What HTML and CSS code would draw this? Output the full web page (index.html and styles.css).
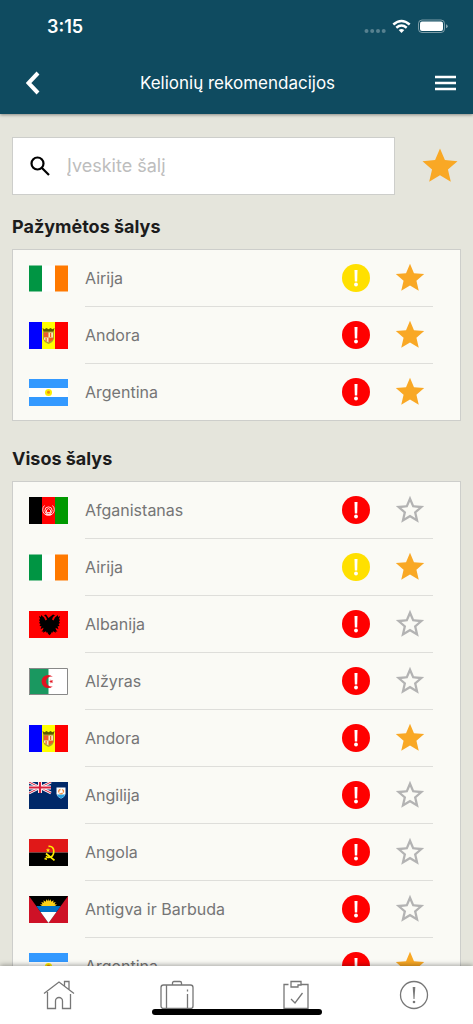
FILE: index.html
```html
<!DOCTYPE html>
<html lang="lt">
<head>
<meta charset="utf-8">
<meta name="viewport" content="width=device-width, initial-scale=1">
<title>Kelionių rekomendacijos</title>
<link rel="stylesheet" href="styles.css">
</head>
<body>
<svg class="sprite" aria-hidden="true">
  <symbol id="star" viewBox="0 0 24 24"><path d="M12 17.27L18.18 21l-1.64-7.03L22 9.24l-7.19-.61L12 2 9.19 8.63 2 9.24l5.46 4.73L5.82 21z"/></symbol>
  <symbol id="star-outline" viewBox="0 0 24 24"><path d="M22 9.24l-7.19-.62L12 2 9.19 8.63 2 9.24l5.46 4.73L5.82 21 12 17.27 18.18 21l-1.63-7.03L22 9.24zM12 15.4l-3.76 2.27 1-4.28-3.32-2.88 4.38-.38L12 6.1l1.71 4.04 4.38.38-3.32 2.88 1 4.28L12 15.4z"/></symbol>
  <symbol id="alert" viewBox="0 0 28 28"><circle cx="14" cy="14" r="14"/><path d="M12.500 6h3l-.3 11.500h-2.400z" fill="#fff"/><circle cx="14" cy="20.500" r="1.900" fill="#fff"/></symbol>

  <symbol id="flag-ie" viewBox="0 0 39 26"><path fill="#009543" d="M0 0h13v26H0z"/><path fill="#fff" d="M13 0h13v26H13z"/><path fill="#ff7900" d="M26 0h13v26H26z"/></symbol>
  <symbol id="flag-ad" viewBox="0 0 39 27"><path fill="#00f" d="M0 0h13v27H0z"/><path fill="#ff0" d="M13 0h13v27H13z"/><path fill="#f00" d="M26 0h13v27H26z"/>
    <path fill="#5c5a00" d="M13.500 6l2 1.200L17.500 6l2 1.200 2-1.200 2 1.200L25.500 6l-1 4h-10z"/><path fill="#b0a030" d="M14 9.500h11v7q-1 4-5.500 5.500Q15 20.500 14 16.500z"/><path fill="#f05a28" d="M15 10.500h4.500v5H15zM19.500 15.500H24v2l-4.500 3z"/><path fill="#fbe6b8" d="M19.500 10.500H24v5h-4.500zM15 15.500h4.500v5l-4.500-3z"/><path fill="#f05a28" d="M21 11h1.200v4H21zM16.500 16h1.200v3h-1.200z"/></symbol>
  <symbol id="flag-ar" viewBox="0 0 39 27"><path fill="#39f" d="M0 0h39v27H0z"/><path fill="#fff" d="M0 9h39v9H0z"/><circle cx="19.500" cy="13.500" r="3.500" fill="#fe0"/><circle cx="19.500" cy="13.300" r="1.500" fill="#f08a10"/></symbol>
  <symbol id="flag-af" viewBox="0 0 39 27"><path d="M0 0h13v27H0z"/><path fill="#f00" d="M13 0h13v27H13z"/><path fill="#090" d="M26 0h13v27H26z"/>
    <g fill="none" stroke="#fff" stroke-opacity=".8"><path d="M15.500 8.500a5.800 5.800 0 1 0 8 0"/><circle cx="19.500" cy="13.500" r="3.600"/><path d="M17.500 15.500v-2.500l2-1.500 2 1.500v2.500zM16.500 17.500h6"/></g></symbol>
  <symbol id="flag-al" viewBox="0 0 39 27"><path fill="#f00" d="M0 0h39v27H0z"/><path d="M19.500 7L17 3.500l-2 .8 2 1.700 1 2.500-1.500 1L15 6.500l-3-2.500v2L10 5l1 3-1 1 1 1.500-1 1.500 1.500 1-1 2 2 .3-1 3 3-1.500-.5 2-1.500 2 2-.5-.5 1.500 3-1.500.5 1.500 1-.5.5 1.500 1.500 1.500 1.500-1.500.5-1.500 1 .5.500-1.500 3 1.500-.5-1.500 2 .5-1.500-2-.5-2 3 1.500-1-3 2-.3-1-2 1.500-1-1-1.500 1-1.500-1-1 1-3-2 1v-2l-3 2.500-1.500 3-1.500-1 1-2.500 2-1.700-2-.8z"/></symbol>
  <symbol id="flag-dz" viewBox="0 0 39 27"><path fill="#fff" d="M0 0h39v27H0z"/><path fill="#1a9860" d="M0 0h19.500v27H0z"/><path fill="#e21420" d="M23.800 8.800A6.600 6.600 0 1 0 23.800 18.200 5 5 0 1 1 23.800 8.800z"/><path fill="#e21420" d="M20 13.500l1.500-.5.200-1.600 1 1.300 1.500-.5-.9 1.300.9 1.300-1.500-.5-1 1.300-.2-1.600z"/><path fill="none" stroke="#888" d="M.5.500h38v26H.5z"/></symbol>
  <symbol id="flag-ai" viewBox="0 0 39 27"><path fill="#002868" d="M0 0h39v27H0z"/><path stroke="#fff" stroke-width="2.600" d="M0 0l22 11M22 0L0 11"/><path stroke="#d8203c" d="M0 0l22 11M22 0L0 11"/><path stroke="#fff" stroke-width="4" d="M11 0v11M0 5.500h22"/><path stroke="#d8203c" stroke-width="2.200" d="M11 0v11M0 5.500h22"/>
    <path fill="#fff" d="M27.500 5.500h9v6q-.5 3.500-4.500 5-4-1.500-4.500-5z"/><path fill="#2a9fe0" d="M27.800 12.500h8.400q-.8 2.800-4.200 4-3.400-1.200-4.200-4z"/><path fill="none" stroke="#f28a3c" stroke-width="1.300" d="M30 10.500q-1-2.500 1.500-3M33 7.500q2.500 1 1 3.200M30.500 11.500q2 .8 3-.5"/></symbol>
  <symbol id="flag-ao" viewBox="0 0 39 27"><path fill="#e01818" d="M0 0h39v13.500H0z"/><path d="M0 13.500h39V27H0z"/><path fill="none" stroke="#fe0" stroke-width="1.700" d="M19.500 7.300c3.500-.5 5.500 2 5.300 5.500-.2 3-2 5.500-5 5.700-1.200 0-2.300-.5-3-1M17 14.500l8.500 6.800M15.500 19.500l2.500.8"/><path fill="#fe0" d="M19 9l.6 1.500 1.600.1-1.300 1 .5 1.600-1.400-.9-1.400.9.500-1.600-1.300-1 1.600-.1z"/></symbol>
  <symbol id="flag-ag" viewBox="0 0 39 27"><path fill="#ce1126" d="M0 0h39v27H0z"/><path d="M0 0h39L19.500 27z"/><path fill="#0072c6" d="M7.220 10h24.560l-4.330 6H11.550z"/><path fill="#fff" d="M11.550 16h15.900L19.500 27z"/><path fill="#fcd116" d="M13 10l-2-1.500 2.500-.3-1.200-2.200 2.500.8-.3-2.500 2.200 1.500.8-2.500 1.500 2 .5-2.800.5 2.800 1.500-2 .8 2.500 2.200-1.500-.3 2.500 2.500-.8-1.200 2.200 2.500.3L26 10z"/></symbol>
</svg>

<div class="app">
  <header class="top">
    <div class="status">
      <span class="time">3:15</span>
      <svg class="status-icons" viewBox="0 0 84 16" aria-hidden="true">
        <g fill="#fff" fill-opacity=".3"><circle cx="2.500" cy="12" r="2"/><circle cx="8.200" cy="12" r="2"/><circle cx="14" cy="12" r="2"/><circle cx="19.700" cy="12" r="2"/></g>
        <g fill="none" stroke="#fff" stroke-width="2.500"><path d="M29.300 5.500q8.200-7 16.400 0"/><path d="M32.300 8.700q5.200-4.300 10.400 0"/></g>
        <path fill="#fff" d="M34.700 11q2.800-2.200 5.600 0l-2.800 3z"/>
        <rect x="54.500" y="1" width="26" height="12.500" rx="3.500" fill="none" stroke="#fff" stroke-opacity=".45"/>
        <rect x="56" y="2.500" width="23" height="9.500" rx="2" fill="#fff"/>
        <path fill="#fff" fill-opacity=".5" d="M82 5.200q1.700.6 1.700 2T82 9.300z"/>
      </svg>
    </div>
    <div class="bar">
      <button class="icon-button" type="button" aria-label="Atgal"><svg class="back-icon" viewBox="0 0 14 24"><path d="M12 2L2.500 12 12 22"/></svg></button>
      <h1 class="title">Kelionių rekomendacijos</h1>
      <button class="icon-button" type="button" aria-label="Meniu"><svg class="menu-icon" viewBox="0 0 21 16"><path d="M0 2h21M0 8h21M0 14h21"/></svg></button>
    </div>
  </header>

  <main class="content">
    <form class="search-row">
      <label class="search">
        <svg class="search-icon" viewBox="0 0 20 20" aria-hidden="true"><circle cx="7.500" cy="7.500" r="6"/><path d="M12 12l7 7"/></svg>
        <input class="search-input" type="text" placeholder="Įveskite šalį" aria-label="Įveskite šalį">
      </label>
      <button class="icon-button" type="button" aria-label="Pažymėtos"><svg class="star-large"><use href="#star"/></svg></button>
    </form>

    <h2 class="heading">Pažymėtos šalys</h2>
    <ul class="card">
      <li class="row"><svg class="flag"><use href="#flag-ie"/></svg><div class="row-body"><span class="name">Airija</span><svg class="alert caution"><use href="#alert"/></svg><button class="icon-button" type="button" aria-label="Airija"><svg class="star on"><use href="#star"/></svg></button></div></li>
      <li class="row"><svg class="flag"><use href="#flag-ad"/></svg><div class="row-body"><span class="name">Andora</span><svg class="alert"><use href="#alert"/></svg><button class="icon-button" type="button" aria-label="Andora"><svg class="star on"><use href="#star"/></svg></button></div></li>
      <li class="row"><svg class="flag"><use href="#flag-ar"/></svg><div class="row-body"><span class="name">Argentina</span><svg class="alert"><use href="#alert"/></svg><button class="icon-button" type="button" aria-label="Argentina"><svg class="star on"><use href="#star"/></svg></button></div></li>
    </ul>

    <h2 class="heading">Visos šalys</h2>
    <ul class="card">
      <li class="row"><svg class="flag"><use href="#flag-af"/></svg><div class="row-body"><span class="name">Afganistanas</span><svg class="alert"><use href="#alert"/></svg><button class="icon-button" type="button" aria-label="Afganistanas"><svg class="star"><use href="#star-outline"/></svg></button></div></li>
      <li class="row"><svg class="flag"><use href="#flag-ie"/></svg><div class="row-body"><span class="name">Airija</span><svg class="alert caution"><use href="#alert"/></svg><button class="icon-button" type="button" aria-label="Airija"><svg class="star on"><use href="#star"/></svg></button></div></li>
      <li class="row"><svg class="flag"><use href="#flag-al"/></svg><div class="row-body"><span class="name">Albanija</span><svg class="alert"><use href="#alert"/></svg><button class="icon-button" type="button" aria-label="Albanija"><svg class="star"><use href="#star-outline"/></svg></button></div></li>
      <li class="row"><svg class="flag"><use href="#flag-dz"/></svg><div class="row-body"><span class="name">Alžyras</span><svg class="alert"><use href="#alert"/></svg><button class="icon-button" type="button" aria-label="Alžyras"><svg class="star"><use href="#star-outline"/></svg></button></div></li>
      <li class="row"><svg class="flag"><use href="#flag-ad"/></svg><div class="row-body"><span class="name">Andora</span><svg class="alert"><use href="#alert"/></svg><button class="icon-button" type="button" aria-label="Andora"><svg class="star on"><use href="#star"/></svg></button></div></li>
      <li class="row"><svg class="flag"><use href="#flag-ai"/></svg><div class="row-body"><span class="name">Angilija</span><svg class="alert"><use href="#alert"/></svg><button class="icon-button" type="button" aria-label="Angilija"><svg class="star"><use href="#star-outline"/></svg></button></div></li>
      <li class="row"><svg class="flag"><use href="#flag-ao"/></svg><div class="row-body"><span class="name">Angola</span><svg class="alert"><use href="#alert"/></svg><button class="icon-button" type="button" aria-label="Angola"><svg class="star"><use href="#star-outline"/></svg></button></div></li>
      <li class="row"><svg class="flag"><use href="#flag-ag"/></svg><div class="row-body"><span class="name">Antigva ir Barbuda</span><svg class="alert"><use href="#alert"/></svg><button class="icon-button" type="button" aria-label="Antigva ir Barbuda"><svg class="star"><use href="#star-outline"/></svg></button></div></li>
      <li class="row"><svg class="flag"><use href="#flag-ar"/></svg><div class="row-body"><span class="name">Argentina</span><svg class="alert"><use href="#alert"/></svg><button class="icon-button" type="button" aria-label="Argentina"><svg class="star on"><use href="#star"/></svg></button></div></li>
    </ul>
  </main>

  <nav class="tabs">
    <a class="tab" href="#" aria-label="Pradžia"><svg class="tab-icon" viewBox="0 0 34 30"><path d="M2 13.500L17 2l15 11.500M5.500 12v16.500h8V21a3.500 3.500 0 0 1 7 0v7.500h8V14M22.500 6V1.500h4.500V9.500"/></svg></a>
    <a class="tab" href="#" aria-label="Kelionės"><svg class="tab-icon" viewBox="0 0 34 30"><rect x="1" y="5" width="32" height="23.500" rx="2.500"/><path d="M6.500 5v23.500M12.500 5V3q0-1.500 1.500-1.500h6q1.500 0 1.500 1.500v2M27.500 9.500v2M27.500 14v14"/></svg></a>
    <a class="tab" href="#" aria-label="Užduotys"><svg class="tab-icon" viewBox="0 0 34 30"><path d="M9.500 4.500H5v24h24v-24h-7M12 1.500h10v3.500h-3v2h-7zM12 19l4 4 7.500-10"/></svg></a>
    <a class="tab" href="#" aria-label="Pagalba"><svg class="tab-icon" viewBox="0 0 34 30"><circle cx="17" cy="15" r="13.500"/><path fill="#777" stroke="none" d="M15.700 7h2.600l-.8 12h-1z"/><circle class="dot" cx="17" cy="22" r="1.300"/></svg></a>
    <span class="home-indicator"></span>
  </nav>
</div>
</body>
</html>
```
FILE: styles.css
```css
* {
  box-sizing: border-box;
}

body {
  margin: 0;
  font-family: Inter, "Noto Sans", sans-serif;
  font-size: 16px;
  line-height: 24px;
  color: #1c1c1c;
  background: #e5e5dc;
}

svg {
  display: block;
  flex: none;
}

.sprite {
  position: absolute;
  width: 0;
  height: 0;
}

.app {
  display: flex;
  flex-direction: column;
  height: 100vh;
}

.top {
  position: relative;
  flex: none;
  background: #0f4b60;
  color: #fff;
  box-shadow: 0 1px 3px rgba(0, 0, 0, 0.4);
}

.status {
  display: flex;
  align-items: center;
  justify-content: space-between;
  height: 52px;
  padding: 2px 25px 0 47px;
}

.time {
  font-size: 18px;
  font-weight: 600;
}

.status-icons {
  width: 84px;
  height: 16px;
}

.bar {
  display: flex;
  align-items: center;
  justify-content: space-between;
  height: 62px;
  padding: 0 17px 0 26px;
}

.title {
  margin: 0;
  font-size: 17px;
  font-weight: 400;
}

.icon-button {
  display: block;
  flex: none;
  margin: 0;
  padding: 0;
  border: 0;
  background: none;
  cursor: pointer;
}

.back-icon {
  width: 14px;
  height: 24px;
  fill: none;
  stroke: #fff;
  stroke-width: 4;
}

.menu-icon {
  width: 21px;
  height: 16px;
  stroke: #fff;
  stroke-width: 2.5;
}

.content {
  flex: 1;
  min-height: 0;
  padding: 23px 12px;
  overflow-y: auto;
  scrollbar-width: none;
}

.search-row {
  display: flex;
  align-items: center;
  gap: 24px;
}

.search {
  display: flex;
  flex: 1;
  align-items: center;
  gap: 17px;
  height: 58px;
  padding: 0 17px;
  border: 1px solid #cdcecb;
  background: #fff;
}

.search-icon {
  width: 20px;
  height: 20px;
  fill: none;
  stroke: #000;
  stroke-width: 2.2;
}

.search-input {
  flex: 1;
  min-width: 0;
  padding: 0;
  border: 0;
  outline: 0;
  background: none;
  font: inherit;
  font-size: 18px;
}

.search-input::placeholder {
  color: #bdbdbd;
  opacity: 1;
}

.star-large {
  width: 42px;
  height: 42px;
  fill: #f9a825;
}

.heading {
  margin: 0;
  padding: 20px 0 10px;
  font-size: 18px;
  font-weight: 700;
}

.card {
  margin: 0 0 6px;
  padding: 0;
  border: 1px solid #cdcecb;
  background: #fafaf5;
  list-style: none;
}

.row {
  display: flex;
  align-items: center;
  gap: 17px;
  padding: 0 27px 0 16px;
}

.flag {
  width: 39px;
  height: 27px;
}

.row-body {
  display: flex;
  flex: 1;
  align-items: center;
  height: 57px;
  padding-right: 6px;
  border-bottom: 1px solid #dededa;
}

.row:last-child .row-body {
  height: 56px;
  border-bottom: 0;
}

.name {
  flex: 1;
  color: #757575;
}

.alert {
  width: 28px;
  height: 28px;
  margin-right: 23px;
  fill: #f00;
}

.caution {
  fill: #ffe000;
}

.star {
  width: 34px;
  height: 34px;
  fill: #b3b3b3;
}

.on {
  fill: #f9a825;
}

.tabs {
  position: relative;
  display: flex;
  flex: none;
  height: 58px;
  background: #fff;
  box-shadow: 0 -1px 5px rgba(0, 0, 0, 0.35);
}

.tab {
  display: flex;
  flex: 1;
  align-items: center;
  justify-content: center;
}

.tab-icon {
  width: 34px;
  height: 30px;
  fill: none;
  stroke: #777;
  stroke-width: 1.3;
}

.dot {
  fill: #777;
  stroke: none;
}

.home-indicator {
  position: absolute;
  bottom: 9px;
  left: 50%;
  width: 170px;
  height: 6px;
  border-radius: 3px;
  background: #000;
  transform: translateX(-50%);
}
```
